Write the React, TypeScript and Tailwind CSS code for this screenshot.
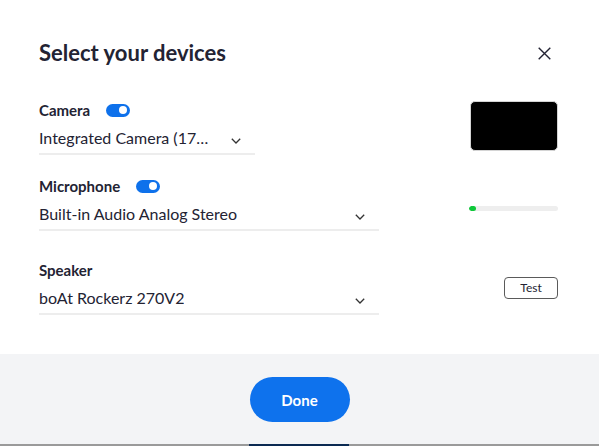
import React from "react";

function Toggle() {
  return (
    <div className="relative h-[13px] w-[24px] rounded-full bg-[#0e71eb]">
      <div className="absolute right-[3px] top-[2.5px] h-[8px] w-[8px] rounded-full bg-white" />
    </div>
  );
}

function Chevron() {
  return (
    <svg width="10" height="6" viewBox="0 0 10 6" fill="none" className="shrink-0">
      <path d="M0.8 0.8 L5 5 L9.2 0.8" stroke="#333" strokeWidth="1.3" />
    </svg>
  );
}

function Select({ value, width, textWidth }: { value: string; width: string; textWidth?: string }) {
  return (
    <div className={`mt-[6px] flex h-[29px] items-start justify-between border-b-2 border-[#ededed] pb-[3px] pr-[14px] ${width}`}>
      <span className={`h-[24px] truncate text-[16px] leading-[24px] text-[#232333] ${textWidth ?? ""}`}>{value}</span>
      <div className="flex h-[24px] items-center pt-[5px]">
        <Chevron />
      </div>
    </div>
  );
}

function Label({ text, toggle }: { text: string; toggle?: boolean }) {
  return (
    <div className="flex h-5 items-center gap-4">
      <span className="text-[15px] font-bold leading-5 text-[#232333]">{text}</span>
      {toggle && <Toggle />}
    </div>
  );
}

export default function App() {
  return (
    <div
      className="flex h-[446px] w-[599px] flex-col bg-white"
      style={{ fontFamily: "Lato, 'Noto Sans', sans-serif" }}
    >
      <div className="flex-1 pl-[39px] pr-[41px] pt-[37px]">
        <div className="flex items-start justify-between">
          <h1 className="text-[22px] font-bold leading-8 text-[#232333]">Select your devices</h1>
          <button className="mr-[2px] mt-[4px] flex h-6 w-6 items-center justify-center">
            <svg width="13" height="13" viewBox="0 0 13 13">
              <path d="M0.7 0.7 L12.3 12.3 M12.3 0.7 L0.7 12.3" stroke="#232333" strokeWidth="1.4" />
            </svg>
          </button>
        </div>

        <div className="mt-[31px] flex items-start justify-between">
          <div>
            <Label text="Camera" toggle />
            <Select value="Integrated Camera (174f:2454)" width="w-[216px]" textWidth="w-[173px]" />
          </div>
          <div className="mt-[1px] h-[50px] w-[88px] rounded-[5px] border border-[#d4d4d4] bg-black" />
        </div>

        <div className="mt-[21px] flex items-start justify-between">
          <div>
            <Label text="Microphone" toggle />
            <Select value="Built-in Audio Analog Stereo" width="w-[340px]" />
          </div>
          <div className="mt-[30px] flex h-[5px] w-[89px] overflow-hidden rounded-full bg-[#eeeeee]">
            <div className="h-full w-[7px] rounded-full bg-[#0fc83a]" />
          </div>
        </div>

        <div className="mt-[29px] flex items-start justify-between">
          <div>
            <Label text="Speaker" />
            <Select value="boAt Rockerz 270V2" width="w-[340px]" />
          </div>
          <button className="mt-[17px] flex h-[22px] w-[54px] items-center justify-center rounded-[4px] border-[1.5px] border-[#5a5a5a] text-[12px] leading-none text-[#232333]">
            Test
          </button>
        </div>
      </div>

      <div className="flex h-[90px] items-center justify-center bg-[#f3f4f6]">
        <button className="h-[45px] w-[100px] rounded-full bg-[#0e72ed] pt-[2px] text-[15px] font-bold text-white">
          Done
        </button>
      </div>
      <div className="flex h-[2px] bg-[#9a9a9a]">
        <div className="ml-[249px] h-full w-[100px] bg-[#0b2a52]" />
      </div>
    </div>
  );
}
